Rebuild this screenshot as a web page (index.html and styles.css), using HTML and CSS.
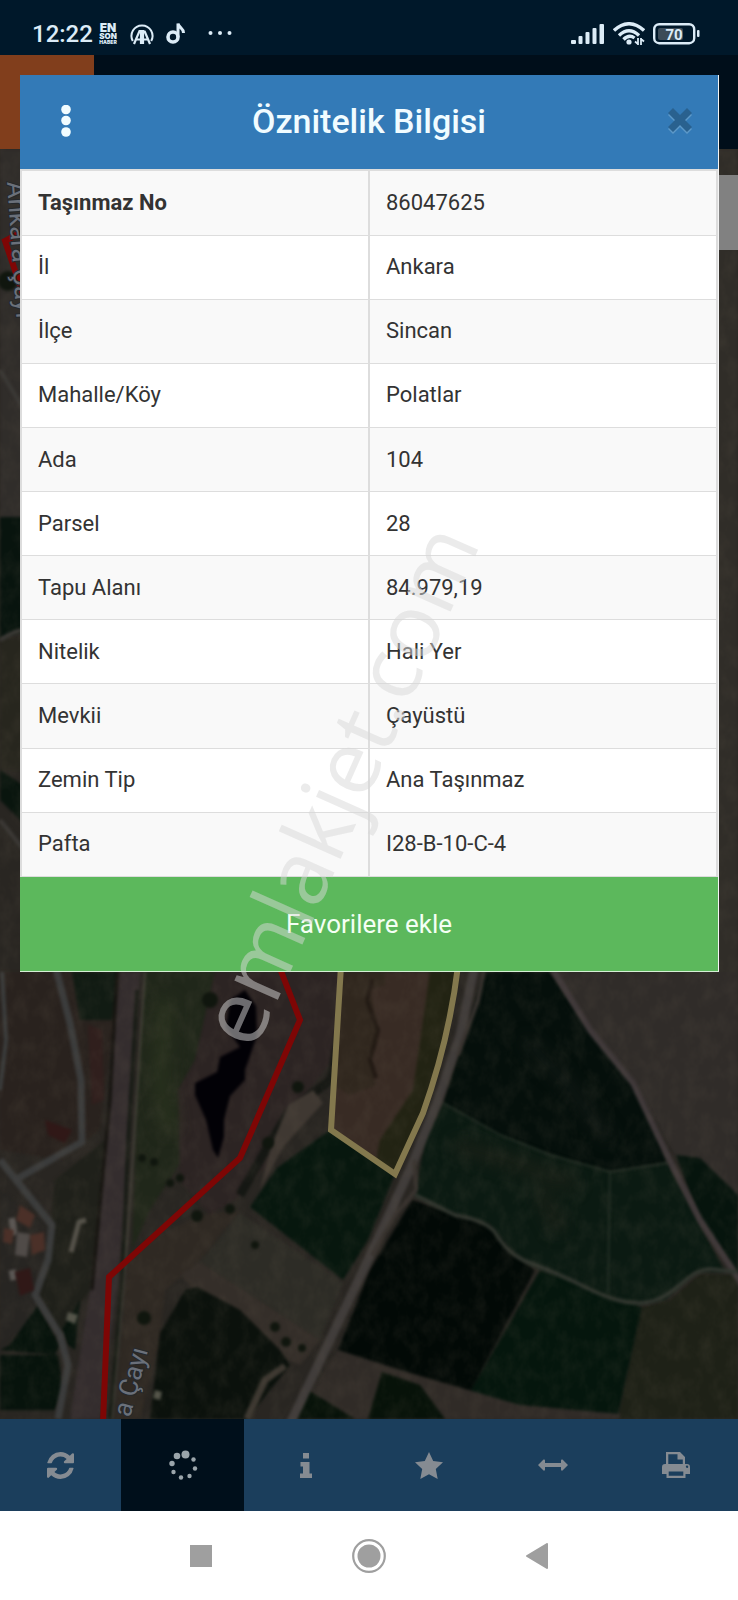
FILE: index.html
```html
<!DOCTYPE html>
<html lang="tr">
<head>
<meta charset="utf-8">
<meta name="viewport" content="width=device-width, initial-scale=1">
<title>Öznitelik Bilgisi</title>
<link rel="stylesheet" href="styles.css">
</head>
<body>
<div class="status">
  <div class="status-group">
    <span class="clock">12:22</span>
    <svg class="ico-news" width="20" height="22" viewBox="0 0 20 22" aria-hidden="true">
      <g text-anchor="middle" fill="#dcecf7"><text x="10" y="9" font-size="12" font-weight="900">EN</text><text x="10" y="16" font-size="8" font-weight="900">SON</text><text x="10" y="21" font-size="5" font-weight="900">HABER</text></g>
    </svg>
    <svg class="ico-aa" width="24" height="22" viewBox="0 0 24 22" fill="none" stroke="#dcecf7" aria-hidden="true">
      <path d="M2.800 18A10.500 10.500 0 1 1 21.200 18" stroke-width="2"/>
      <path d="M4 21 9.500 8H11V21M6.500 16.500h4.500M14.500 8H13V21M14.500 8 20 21M13 16.500h5" stroke-width="2.200"/>
    </svg>
    <svg class="ico-note" width="20" height="23" viewBox="0 0 20 23" fill="none" stroke="#dcecf7" aria-hidden="true">
      <circle cx="7" cy="15" r="5" stroke-width="3.600"/><path d="M12 15V1.500C13 6 17.500 5.500 17.500 11" stroke-width="3"/>
    </svg>
    <svg width="24" height="6" viewBox="0 0 24 6" fill="#dcecf7" aria-hidden="true"><circle cx="2.500" cy="2" r="2"/><circle cx="12" cy="2" r="2"/><circle cx="21.500" cy="2" r="2"/></svg>
  </div>
  <div class="status-group status-right">
    <svg width="34" height="22" viewBox="0 0 34 22" fill="#dcecf7" aria-hidden="true"><rect x="0" y="17" width="5" height="4" rx="1"/><rect x="7.500" y="13" width="4" height="8" rx="1"/><rect x="14.500" y="9" width="4" height="12" rx="1"/><rect x="21.500" y="5" width="4" height="16" rx="1"/><rect x="28.500" y="1" width="4.500" height="20" rx="1"/></svg>
    <svg width="32" height="24" viewBox="0 0 32 24" fill="none" stroke="#dcecf7" stroke-width="3.400" aria-hidden="true"><path d="M1 8.500Q16-5 31 8.500M6 13.500Q16 4 26 13.500M10.500 17.500Q16 12 21.500 16"/><circle cx="16" cy="20" r="2.600" fill="#dcecf7" stroke="none"/><path d="M25 16v7M22 19.500l3 2.500M28 23v-7M31 19.500l-3-2.500" stroke-width="1.800"/></svg>
    <svg width="47" height="22" viewBox="0 0 47 22" aria-hidden="true"><rect x="5" y="5" width="25" height="12" rx="2" fill="#3c4b58"/><rect x="1.200" y="1.200" width="40" height="19" rx="5" fill="none" stroke="#dcecf7" stroke-width="2.400"/><rect x="44" y="7" width="2.500" height="7" rx="1" fill="#dcecf7"/><text x="21" y="16.500" font-size="15" font-weight="700" text-anchor="middle" fill="#dcecf7">70</text></svg>
  </div>
</div>

<main class="stage">
  <div class="backdrop">
    <div class="appbar"><div class="appbar-tab"></div></div>
    <svg class="map" viewBox="0 149 738 1270" preserveAspectRatio="xMidYMax slice" aria-hidden="true">
      <defs>
        <filter id="soft" x="-5%" y="-5%" width="110%" height="110%" color-interpolation-filters="sRGB"><feGaussianBlur stdDeviation="1.500"/></filter>
        <filter id="haze" x="-30%" y="-30%" width="160%" height="160%" color-interpolation-filters="sRGB"><feGaussianBlur stdDeviation="8"/></filter>
        <filter id="grain" x="0" y="0" width="100%" height="100%" color-interpolation-filters="sRGB"><feTurbulence type="fractalNoise" baseFrequency=".07 .05" numOctaves="4" seed="8"/><feColorMatrix values="0 0 0 0 .42  0 0 0 0 .38  0 0 0 0 .32  1.600 0 0 0 -.6"/></filter>
      </defs>
      <rect y="149" width="738" height="1270" fill="#292622"/>
      <g filter="url(#soft)">
        <path d="M0 149H30V517H0z" fill="#302d2a"/>
        <path d="M0 517H30V630L0 638z" fill="#08140e"/>
        <path d="M0 638H30V770H0z" fill="#27261e"/>
        <path d="M0 770 30 790V830L0 800z" fill="#09150e"/>
        <path d="M700 149H738V1000H700z" fill="#302d28"/>
        <path d="M0 972H120L100 1130 60 1160 0 1150z" fill="#29221e"/>
        <path d="M72 972H118L112 1020H80z" fill="#111b13"/>
        <path d="M88 1025 102 1030 104 1100 92 1105z" fill="#301f1d"/>
        <path d="M0 1190 50 1225 50 1300 0 1350z" fill="#272522"/>
        <path d="M55 1180 105 1140 90 1290 60 1335 40 1295 50 1230z" fill="#1f201a"/>
        <path d="M10 1345 38 1305 60 1345 55 1355 0 1350zM0 1355H58L63 1390 55 1410H0z" fill="#07130c"/>
        <path d="M62 1330 80 1300 75 1350 68 1345z" fill="#07130c"/>
        <path d="M145 972H215L195 1060 178 1090 182 1160 150 1210 132 1250 138 1080z" fill="#20271a"/>
        <path d="M215 972H341L333 1060 300 1100 272 1160 235 1200 210 1215 180 1180 178 1090 195 1060z" fill="#2c2423"/>
        <path d="M340 1030 331 1080 290 1110 260 1160 240 1195" stroke="#151713" stroke-width="9" fill="none"/>
        <path d="M313 1090 323 1103 283 1147 260 1190 270 1150 288 1105z" fill="#3f3832"/>
        <path d="M120 972H140L133 1060 125 1200 118 1280 100 1419H70L90 1290 105 1160 113 1060z" fill="#342d2e"/>
        <path d="M117 972 110 1100 92 1290" stroke="#15130f" stroke-width="3" fill="none"/>
        <path d="M145 972 138 1080 128 1230 112 1419" stroke="#45433a" stroke-width="2" fill="none"/>
        <path d="M137 990 128 1140 122 1280 110 1419" stroke="#151a13" stroke-width="3" fill="none"/>
        <path d="M150 1240 200 1215 240 1210 200 1260 165 1290 160 1340 140 1419H115L128 1260z" fill="#2f2923"/>
        <path d="M240 1213 343 1283 320 1340 200 1262z" fill="#2d2c26"/>
        <path d="M200 1262 320 1340 300 1365 250 1345 180 1275z" fill="#342e29"/>
        <path d="M197 1287 240 1310 280 1350 290 1365 247 1419H150L160 1333 185 1290z" fill="#0b110c"/>
        <path d="M330 1130 395 1174 368 1240 343 1280 250 1207 277 1168z" fill="#07170e"/>
        <path d="M341 972H458L445 1035 423 1113 395 1174 331 1130z" fill="#382b24"/>
        <path d="M430 972H458L445 1035 423 1113 395 1174 376 1160 380 1140 413 1090z" fill="#222313"/>
        <path d="M340 972H385V985L370 990 378 1030 368 1060 376 1085 350 1095 333 1085z" fill="#30271e"/>
        <path d="M372 980 367 1000 378 1030 370 1060 376 1078" stroke="#211913" stroke-width="4" fill="none"/>
        <path d="M484 972H550L590 1030 632 1080 668 1162 610 1172 550 1155 500 1135 443 1103 460 1050z" fill="#050f0b"/>
        <path d="M550 972H738V1200L720 1190 700 1160 675 1155 632 1080 590 1030z" fill="#302c29"/>
        <path d="M676 1155 700 1158 738 1195V1275L700 1220z" fill="#06140d"/>
        <path d="M443 1103 500 1135 550 1155 610 1172 668 1163 725 1272 695 1272 665 1300 630 1305 580 1285 530 1265 510 1250 490 1225 450 1213 415 1195 425 1140z" fill="#0b1a12"/>
        <path d="M412 1200 490 1225 515 1255 535 1270 470 1392 400 1370 338 1350 370 1270z" fill="#020906"/>
        <path d="M540 1270 642 1307 618 1414 520 1405 470 1392z" fill="#05160d"/>
        <path d="M642 1307 670 1300 700 1274 738 1275V1419H618z" fill="#1e2117"/>
        <path d="M338 1350 400 1370 520 1405 620 1414V1419H295z" fill="#302b27"/>
        <path d="M382 1372 420 1385 445 1419H368zM308 1390 355 1419H295z" fill="#071209"/>
      </g>
      <g filter="url(#haze)">
        <path d="M525 1040 560 1075 610 1140" stroke="#141b17" stroke-width="9" fill="none"/>
        <path d="M455 1145 520 1165 575 1185M540 1190 560 1230" stroke="#1c2118" stroke-width="12" fill="none"/>
        <path d="M165 1000 160 1080 170 1130" stroke="#29321e" stroke-width="14" fill="none"/>
      </g>
      <g fill="none" stroke-linejoin="round" filter="url(#soft)">
        <path d="M443 1103 500 1135 550 1155 610 1172 668 1163M610 1172 608 1292" stroke="#222d24" stroke-width="2"/>
        <path d="M55 965 70 1023 81 1080 82 1142 15 1180M0 1160 52 1225 48 1260 35 1295 60 1335 68 1365 58 1419" stroke="#3b3c3c" stroke-width="7"/>
        <path d="M2 972 6 1040 0 1090" stroke="#3b3d3d" stroke-width="4"/>
        <path d="M285 1366 265 1380 247 1419" stroke="#3d3831" stroke-width="7"/>
        <path d="M475 965 460 1035 438 1100 411 1167 368 1260 290 1424" stroke="#413d3b" stroke-width="9"/>
        <path d="M485 965 478 1000 458 1055M414 1160 416 1190 395 1215 372 1255" stroke="#38332f" stroke-width="4"/>
        <path d="M550 965 590 1030 633 1083 672 1165 700 1220 742 1284" stroke="#40393a" stroke-width="6"/>
        <path d="M415 1195 455 1215Q485 1220 495 1232 508 1255 530 1263T575 1282C610 1300 625 1303 640 1303 675 1302 685 1270 710 1269L738 1272" stroke="#30352e" stroke-width="4"/>
        <path d="M0 640Q16 630 24 630M0 820 24 850M0 370 24 410" stroke="#3b3936" stroke-width="4"/>
        <path d="M71 1252 79 1222 86 1220" stroke="#55524a" stroke-width="5"/>
        <path d="M14 1235 12 1218M12 1270 14 1280" stroke="#5b5754" stroke-width="7"/>
      </g>
      <rect y="149" width="738" height="1270" filter="url(#grain)" opacity=".16"/>
      <g filter="url(#soft)">
        <path d="M20 1205 35 1215 30 1228 16 1220zM30 1235 44 1232 45 1250 32 1255zM4 1228 14 1230 12 1244 3 1242z" fill="#4b3028"/>
        <path d="M17 1232 30 1234 27 1257 15 1255z" fill="#504b48"/>
        <path d="M15 1272 30 1268 34 1290 20 1296zM45 1120 72 1130 65 1143 48 1135z" fill="#301817"/>
        <path d="M68 1312 78 1315 75 1324 66 1320zM155 1390 162 1392 160 1400 153 1398z" fill="#55554a"/>
        <path d="M245 990 256 1006 257 1036 245 1070 245 1080 230 1096 224 1120 224 1137 218 1158 213 1150 206 1120 195 1095 195 1083 217 1072 220 1057 240 1047 226 1028 230 1000z" fill="#020106"/>
        <g fill="#10160e"><circle cx="142" cy="1158" r="4"/><circle cx="154" cy="1162" r="4"/><circle cx="170" cy="1183" r="4"/><circle cx="180" cy="1178" r="4"/><circle cx="197" cy="1216" r="6"/><circle cx="255" cy="1245" r="4"/><circle cx="230" cy="1209" r="5"/><circle cx="275" cy="1327" r="5"/><circle cx="286" cy="1342" r="5"/><circle cx="302" cy="1348" r="4"/><circle cx="144" cy="1318" r="7"/><circle cx="268" cy="1143" r="6"/><circle cx="298" cy="1087" r="6"/><circle cx="210" cy="1000" r="8"/><circle cx="8" cy="281" r="10"/></g>
      </g>
      <g fill="none" stroke-width="6">
        <path d="M24 231 5 241 24 297M279 966 300 1020 240 1158 109 1277 103 1422" stroke="#7e0605"/>
        <path d="M341 966 331 1130 395 1174 423 1113Q449 1040 458 966" stroke="#83784d"/>
      </g>
      <g font-size="26" fill="#6a707a" stroke="#24282d" stroke-width="2" paint-order="stroke">
        <text transform="translate(7 182) rotate(86)">Ankara Çayı</text>
        <text transform="translate(130 1418) rotate(-75)">a Çayı</text>
      </g>
    </svg>
    <div class="map-control"></div>
  </div>

  <section class="dialog" role="dialog" aria-labelledby="dialog-title">
    <header class="dialog-head">
      <button class="head-btn" type="button" aria-label="Menü"><svg width="10" height="32" viewBox="0 0 10 32" fill="#f1fcff"><circle cx="5" cy="4.500" r="4.800"/><circle cx="5" cy="15.500" r="4.800"/><circle cx="5" cy="27" r="4.800"/></svg></button>
      <h1 class="title" id="dialog-title">Öznitelik Bilgisi</h1>
      <button class="head-btn" type="button" aria-label="Kapat"><svg width="24" height="26" viewBox="0 0 24 26"><path d="M5 0 12 7 19 0 24 5 17 12 24 19 19 24 12 17 5 24 0 19 7 12 0 5z" transform="translate(0 2)" fill="#5c98c8"/><path d="M5 0 12 7 19 0 24 5 17 12 24 19 19 24 12 17 5 24 0 19 7 12 0 5z" fill="#29618f"/></svg></button>
    </header>
    <table class="attrs">
      <tbody>
        <tr><th scope="row" class="strong">Taşınmaz No</th><td>86047625</td></tr>
        <tr><th scope="row">İl</th><td>Ankara</td></tr>
        <tr><th scope="row">İlçe</th><td>Sincan</td></tr>
        <tr><th scope="row">Mahalle/Köy</th><td>Polatlar</td></tr>
        <tr><th scope="row">Ada</th><td>104</td></tr>
        <tr><th scope="row">Parsel</th><td>28</td></tr>
        <tr><th scope="row">Tapu Alanı</th><td>84.979,19</td></tr>
        <tr><th scope="row">Nitelik</th><td>Hali Yer</td></tr>
        <tr><th scope="row">Mevkii</th><td>Çayüstü</td></tr>
        <tr><th scope="row">Zemin Tip</th><td>Ana Taşınmaz</td></tr>
        <tr><th scope="row">Pafta</th><td>I28-B-10-C-4</td></tr>
      </tbody>
    </table>
    <button class="favorite" type="button">Favorilere ekle</button>
  </section>
  <div class="watermark" aria-hidden="true"><span>emlakjet.com</span></div>
</main>

<nav class="tools" aria-label="Harita araçları">
  <button type="button" aria-label="Yenile"><svg width="27" height="27" viewBox="0 0 1536 1536"><path d="M1511 928q0 5-1 7-64 268-268 434.500t-478 166.500q-146 0-282.500-55t-243.500-157l-129 129q-19 19-45 19t-45-19-19-45v-448q0-26 19-45t45-19h448q26 0 45 19t19 45-19 45l-137 137q71 66 161 102t187 36q134 0 250-65t186-179q11-17 53-117 8-23 30-23h192q13 0 22.500 9.500t9.500 22.500zm25-800v448q0 26-19 45t-45 19h-448q-26 0-45-19t-19-45 19-45l138-138q-148-137-349-137-134 0-250 65t-186 179q-11 17-53 117-8 23-30 23h-199q-13 0-22.500-9.500t-9.500-22.500v-7q65-268 270-434.500t480-166.500q146 0 284 55.500t245 156.500l130-129q19-19 45-19t45 19 19 45z"/></svg></button>
  <button type="button" class="active" aria-label="Yükleniyor"><svg width="30" height="30" viewBox="0 0 30 30"><circle cx="17.500" cy="4.500" r="4"/><circle cx="9" cy="6" r="3.300"/><circle cx="4" cy="13.500" r="2.700"/><circle cx="5.500" cy="22" r="2.200"/><circle cx="13" cy="27.500" r="2.200"/><circle cx="21.500" cy="26" r="2.200"/><circle cx="27" cy="18.500" r="2.200"/><circle cx="25.500" cy="9.500" r="2.200"/></svg></button>
  <button type="button" aria-label="Bilgi"><svg width="12" height="25" viewBox="0 0 12 25"><path d="M3 0H9V5.500H3zM.5 9H9.500V20.500H12V25H0V20.500H3V13.500H.5z"/></svg></button>
  <button type="button" aria-label="Favoriler"><svg width="28" height="27" viewBox="0 0 28 27"><path d="M14 0 18.200 9 28 10.200 20.800 17 22.700 27 14 22.200 5.300 27 7.200 17 0 10.200 9.800 9z"/></svg></button>
  <button type="button" aria-label="Ölç"><svg width="30" height="12" viewBox="0 0 30 12"><path d="M0 6 5.500.5Q7 0 7 1.500V4H23V1.500Q23 0 24.500.5L30 6 24.500 11.500Q23 12 23 10.500V8H7V10.500Q7 12 5.500 11.500z"/></svg></button>
  <button type="button" aria-label="Yazdır"><svg width="28" height="26" viewBox="0 0 28 26"><path fill-rule="evenodd" d="M4 12V0H18L23 5V12H25Q28 12 28 15V22H23.500V26H4.500V22H0V15Q0 12 3 12zM6.300 2.200V12H20.800V7.500H15.500V2.200zM6.700 19.500V23.800H21.300V19.500zM25 13.500a1.200 1.200 0 1 0 .1 2.400 1.200 1.200 0 0 0-.1-2.400z"/></svg></button>
</nav>

<nav class="sysnav" aria-label="Sistem">
  <button type="button" aria-label="Son uygulamalar"><svg width="22" height="22" viewBox="0 0 22 22"><rect width="22" height="22" fill="#9f9f9f"/></svg></button>
  <button type="button" aria-label="Ana ekran"><svg width="34" height="34" viewBox="0 0 34 34"><circle cx="17" cy="17" r="15.800" fill="none" stroke="#9f9f9f" stroke-width="2.200"/><circle cx="17" cy="17" r="11.500" fill="#9f9f9f"/></svg></button>
  <button type="button" aria-label="Geri"><svg width="22" height="26" viewBox="0 0 22 26"><path d="M1 13 21 1V25z" fill="#9f9f9f" stroke="#9f9f9f" stroke-width="2" stroke-linejoin="round"/></svg></button>
</nav>
</body>
</html>
```
FILE: styles.css
```css
* {
  box-sizing: border-box;
}

body {
  margin: 0;
  min-height: 100vh;
  display: flex;
  flex-direction: column;
  background: #fff;
  color: #333;
  font-family: Roboto, "Noto Sans", sans-serif;
}

button {
  margin: 0;
  padding: 0;
  border: 0;
  background: none;
  font: inherit;
  cursor: pointer;
}

svg {
  display: block;
  flex: none;
}

/* Status bar */
.status {
  display: flex;
  justify-content: space-between;
  align-items: center;
  height: 55px;
  padding: 12px 38px 0 32px;
  background: #00182a;
  color: #dcecf7;
}

.status-group {
  display: flex;
  align-items: center;
}

.status-right {
  gap: 8px;
}

.clock {
  margin-right: 5px;
  font-size: 24px;
  line-height: 28px;
  font-weight: 500;
}

.ico-news {
  overflow: visible;
  font-family: Inter, sans-serif;
}

.ico-aa {
  margin-left: 12px;
}

.ico-note {
  margin: 0 22px 0 12px;
}

/* Map behind the dialog */
.stage {
  position: relative;
  flex: 1;
  padding: 20px 19px 447px 20px;
}

.backdrop {
  position: absolute;
  inset: 0;
  display: flex;
  flex-direction: column;
  overflow: hidden;
}

.appbar {
  flex: none;
  height: 94px;
  background: #000e1a;
}

.appbar-tab {
  width: 94px;
  height: 100%;
  background: #813e1c;
}

.map {
  flex: 1;
  width: 100%;
  min-height: 0;
}

.map-control {
  position: absolute;
  top: 120px;
  right: 0;
  width: 76px;
  height: 75px;
  background: #818181;
}

/* Attribute dialog */
.dialog {
  position: relative;
  background: #fff;
  border-right: 1px solid #f4f4f4;
  border-bottom: 1px solid #d5efd5;
}

.dialog-head {
  display: grid;
  grid-template-columns: 1fr auto 1fr;
  align-items: center;
  height: 94px;
  padding: 0 14px 2px 22px;
  background: #337ab7;
}

.head-btn {
  display: grid;
  place-items: center;
  width: 48px;
  height: 48px;
}

.head-btn:last-child {
  justify-self: end;
}

.title {
  margin: 0;
  padding-right: 8px;
  color: #f1fcff;
  font-size: 34px;
  line-height: 40px;
  font-weight: 500;
}

.attrs {
  width: 100%;
  height: 708px;
  table-layout: fixed;
  border-collapse: collapse;
  border: 2px solid #ddd;
  border-bottom: 0;
  font-size: 22px;
  line-height: 32px;
}

.attrs th,
.attrs td {
  padding: 0 16px;
  border: 2px solid #ddd;
  border-width: 1px 2px;
  text-align: left;
  font-weight: 400;
}

.attrs tr:nth-child(odd) {
  background: #f9f9f9;
}

.attrs .strong {
  font-weight: 700;
}

.favorite {
  display: block;
  width: 100%;
  height: 94px;
  background: #5cb85c;
  color: #f4fff4;
  font-size: 26px;
  line-height: 32px;
}

/* Diagonal watermark laid over everything */
.watermark {
  position: absolute;
  inset: 0 64px 447px 0;
  display: grid;
  place-items: center;
  padding: 540px 0 0;
  pointer-events: none;
}

.watermark span {
  color: rgb(215 215 215 / 50%);
  font: 500 89px/96px "Open Sans", sans-serif;
  transform: rotate(-66deg);
}

/* Toolbar */
.tools {
  position: relative;
  display: grid;
  grid-template-columns: 121px repeat(5, 1fr);
  height: 92px;
  background: #1b3e5c;
  fill: #858b92;
}

.tools button {
  display: grid;
  place-items: center;
}

.tools .active {
  background: #000f1b;
  fill: #9ba5ab;
}

/* System navigation */
.sysnav {
  display: flex;
  justify-content: center;
  align-items: center;
  gap: 120px;
  height: 89px;
}

.sysnav button {
  display: grid;
  place-items: center;
  width: 48px;
  height: 48px;
}
```
